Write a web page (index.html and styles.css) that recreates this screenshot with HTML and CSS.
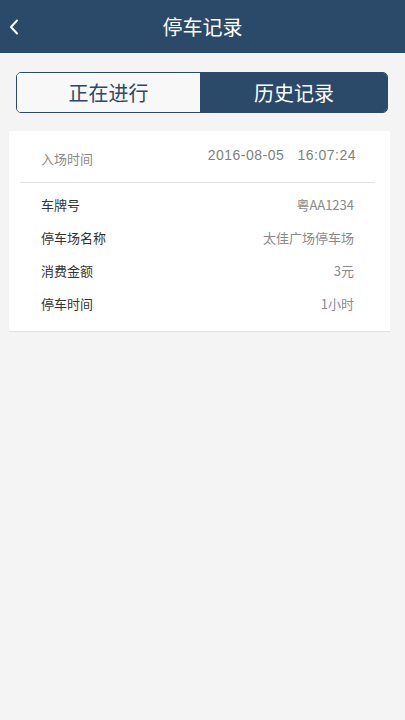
FILE: index.html
```html
<!DOCTYPE html>
<html lang="zh-CN">
  <head>
    <meta charset="UTF-8" />
    <meta name="viewport" content="width=device-width, initial-scale=1.0" />
    <title>停车记录</title>
    <link rel="stylesheet" href="styles.css">
  </head>
  <body>
    <div class="header">
      <a class="back" href="#">
        <svg width="10" height="16" viewBox="0 0 10 16">
          <path d="M8 1.5 L2 8 L8 14.5" fill="none" stroke="#fff" stroke-width="2" stroke-linecap="round" stroke-linejoin="round" />
        </svg>
      </a>
      <h1>停车记录</h1>
    </div>

    <div class="tabs">
      <div class="tab">正在进行</div>
      <div class="tab active">历史记录</div>
    </div>

    <div class="record">
      <div class="record-head">
        <span class="label">入场时间</span>
        <span class="time">2016-08-05&nbsp;&nbsp;&nbsp;16:07:24</span>
      </div>
      <div class="record-body">
        <div class="row"><span>车牌号</span><span class="value">粤AA1234</span></div>
        <div class="row"><span>停车场名称</span><span class="value">太佳广场停车场</span></div>
        <div class="row"><span>消费金额</span><span class="value">3元</span></div>
        <div class="row"><span>停车时间</span><span class="value">1小时</span></div>
      </div>
    </div>
  </body>
</html>
```

FILE: styles.css
```css
body {
  font-family: "Noto Sans CJK SC", "Liberation Sans", sans-serif;
  margin: 0;
  padding: 0;
  background-color: #f4f4f4;
  color: #333;
}

.header {
  position: relative;
  height: 53px;
  background-color: #2b4a6a;
  display: flex;
  align-items: center;
  justify-content: center;
}

.header h1 {
  margin: 0;
  font-size: 20px;
  font-weight: normal;
  color: #fff;
}

.back {
  position: absolute;
  left: 9px;
  top: 19px;
  display: block;
}

.back svg {
  display: block;
}

.tabs {
  display: flex;
  margin: 19px 17px 0 16px;
  height: 41px;
  border: 1px solid #2b4a6a;
  border-radius: 5px;
  overflow: hidden;
  box-sizing: border-box;
}

.tab {
  flex: 1;
  display: flex;
  align-items: center;
  justify-content: center;
  font-size: 20px;
  color: #2b4a6a;
  background-color: #f8f8f8;
}

.tab:first-child {
  flex: 0 0 183px;
  border-right: 1px solid #2b4a6a;
}

.tab.active {
  background-color: #2b4a6a;
  color: #fff;
}

.record {
  margin: 18px 15px 0 9px;
  background-color: #fff;
  border-bottom: 1px solid #e2e2e2;
}

.record-head {
  display: flex;
  justify-content: space-between;
  align-items: center;
  height: 51px;
  margin: 0 15px 0 11px;
  padding: 0 19px 0 21px;
  border-bottom: 1px solid #e4e4e4;
}

.record-head .label {
  font-size: 13px;
  color: #8a8a8a;
  padding-top: 3px;
}

.record-head .time {
  font-family: "Liberation Sans", sans-serif;
  font-size: 14px;
  letter-spacing: 0.5px;
  color: #808080;
  margin-bottom: 4px;
}

.record-body {
  padding: 5px 36px 11px 32px;
}

.row {
  display: flex;
  justify-content: space-between;
  align-items: center;
  height: 33px;
  font-size: 13px;
}

.row .value {
  color: #8a8a8a;
}
```
